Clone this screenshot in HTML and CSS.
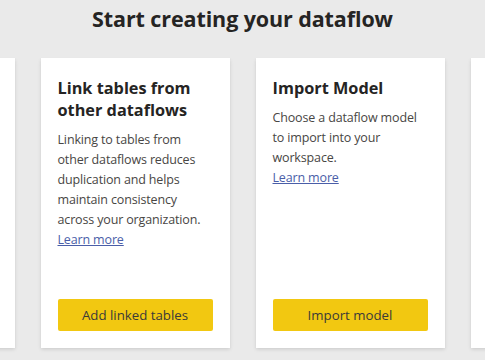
FILE: index.html
```html
<!DOCTYPE html>
<html lang="en">
  <head>
    <meta charset="UTF-8" />
    <title>Start creating your dataflow</title>
    <link rel="stylesheet" href="styles.css">
  </head>
  <body>
    <main class="page">
      <h1 class="page-title">Start creating your dataflow</h1>

      <div class="card-row">
        <!-- outer cards are only peeking in at the edges -->
        <section class="card card-peek"></section>

        <section class="card">
          <h2 class="card-title">Link tables from other dataflows</h2>
          <p class="card-text">
            Linking to tables from other dataflows reduces duplication and
            helps maintain consistency across your organization.
            <a href="#" class="card-link">Learn more</a>
          </p>
          <button class="card-button">Add linked tables</button>
        </section>

        <section class="card">
          <h2 class="card-title">Import Model</h2>
          <p class="card-text">
            Choose a dataflow model to import into your workspace.
            <a href="#" class="card-link">Learn more</a>
          </p>
          <button class="card-button">Import model</button>
        </section>

        <section class="card card-peek"></section>
      </div>
    </main>
  </body>
</html>
```

FILE: styles.css
```css
:root {
  --bg-page: #eaeaea;
  --bg-card: #ffffff;
  --text-title: #252423;
  --text-body: #484644;
  --link: #4a5ea8;
  --button: #f2c811;
  --card-width: 189px;
  --card-gap: 26px;
  --card-pad: 17px;
}

* {
  margin: 0;
  padding: 0;
  box-sizing: border-box;
}

html,
body {
  overflow: hidden;
}

body {
  font-family: "Open Sans", "Noto Sans", sans-serif;
  background: var(--bg-page);
  color: var(--text-title);
  width: 485px;
  height: 360px;
}

.page {
  display: flex;
  flex-direction: column;
  align-items: center;
  padding-top: 4px;
}

.page-title {
  font-size: 21.5px;
  font-weight: 700;
  line-height: 30px;
  color: var(--text-title);
  letter-spacing: -0.1px;
}

.card-row {
  display: flex;
  justify-content: center;
  gap: var(--card-gap);
  margin-top: 24px;
  width: 100%;
}

.card {
  flex: 0 0 var(--card-width);
  height: 290px;
  background: var(--bg-card);
  padding: var(--card-pad);
  padding-top: 19px;
  display: flex;
  flex-direction: column;
  box-shadow: 0 1.6px 3.6px rgba(0, 0, 0, 0.13), 0 0.3px 0.9px rgba(0, 0, 0, 0.11);
}

.card-title {
  font-size: 16.3px;
  font-weight: 700;
  line-height: 22px;
  margin-bottom: 9px;
}

.card-text {
  font-size: 12.5px;
  line-height: 20px;
  letter-spacing: -0.15px;
  color: var(--text-body);
}

.card-link {
  display: block;
  color: var(--link);
  text-decoration: underline;
}

.card-button {
  margin-top: auto;
  height: 32px;
  width: 100%;
  border: none;
  border-radius: 2px;
  background: var(--button);
  color: #3b3a39;
  font-family: inherit;
  font-size: 13.25px;
  cursor: pointer;
}
```
